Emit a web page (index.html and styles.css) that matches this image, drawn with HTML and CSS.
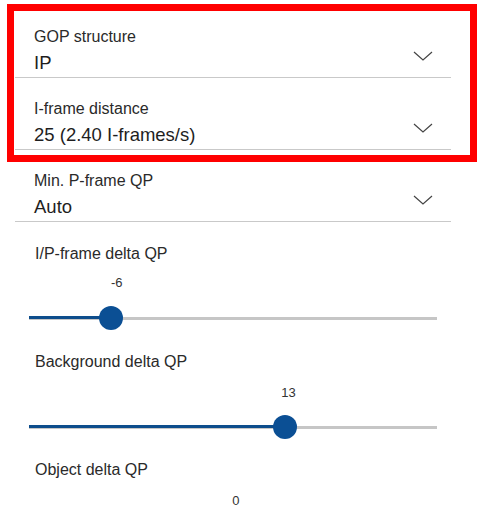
FILE: index.html
```html
<!DOCTYPE html>
<html lang="en">
<head>
  <meta charset="UTF-8" />
  <title>Stream settings</title>
  <link rel="stylesheet" href="styles.css">
</head>
<body>
  <div class="panel">
    <div class="field">
      <div class="field-text">
        <div class="label">GOP structure</div>
        <div class="value">IP</div>
      </div>
      <svg class="chevron" width="20" height="10" viewBox="0 0 20 10"><polyline points="1,1 10,9 19,1" /></svg>
    </div>

    <div class="field">
      <div class="field-text">
        <div class="label">I-frame distance</div>
        <div class="value">25 (2.40 I-frames/s)</div>
      </div>
      <svg class="chevron" width="20" height="10" viewBox="0 0 20 10"><polyline points="1,1 10,9 19,1" /></svg>
    </div>

    <div class="field">
      <div class="field-text">
        <div class="label">Min. P-frame QP</div>
        <div class="value">Auto</div>
      </div>
      <svg class="chevron" width="20" height="10" viewBox="0 0 20 10"><polyline points="1,1 10,9 19,1" /></svg>
    </div>

    <div class="slider">
      <div class="label">I/P-frame delta QP</div>
      <div class="bubble-row"><span class="bubble" style="left: 21.5%">-6</span></div>
      <div class="track">
        <div class="fill" style="width: 20.1%"></div>
        <div class="thumb" style="left: 20.1%"></div>
      </div>
    </div>

    <div class="slider">
      <div class="label">Background delta QP</div>
      <div class="bubble-row"><span class="bubble" style="left: 63.6%">13</span></div>
      <div class="track">
        <div class="fill" style="width: 62.7%"></div>
        <div class="thumb" style="left: 62.7%"></div>
      </div>
    </div>

    <div class="slider">
      <div class="label">Object delta QP</div>
      <div class="bubble-row"><span class="bubble" style="left: 50.7%">0</span></div>
      <div class="track">
        <div class="fill" style="width: 49.8%"></div>
        <div class="thumb" style="left: 49.8%"></div>
      </div>
    </div>

    <div class="highlight"></div>
  </div>
</body>
</html>
```

FILE: styles.css
```css
html {
  overflow: hidden;
}
body {
  margin: 0;
  background: #fff;
  font-family: "Liberation Sans", Arial, sans-serif;
  color: #222;
}
.panel {
  position: relative;
  width: 436px;
  padding: 6px 0 0 15px;
}
.field {
  display: flex;
  justify-content: space-between;
  height: 72px;
  box-sizing: border-box;
  padding: 22px 18px 3px 19px;
  border-bottom: 1px solid #c9c9c9;
}
.label {
  font-size: 16px;
  line-height: 18px;
  color: #2a2a2a;
}
.value {
  margin-top: 6px;
  font-size: 18.5px;
  line-height: 22px;
  color: #1e1e1e;
}
.chevron {
  margin-top: 23px;
  fill: none;
  stroke: #444;
  stroke-width: 1.2;
}
.slider {
  height: 108px;
  padding-top: 23px;
  box-sizing: border-box;
}
.slider .label {
  padding-left: 20px;
}
.bubble-row {
  position: relative;
  height: 15px;
  margin: 12px 0 0 14px;
  width: 408px;
}
.bubble {
  position: absolute;
  top: 0;
  transform: translateX(-50%);
  font-size: 13px;
  line-height: 15px;
  color: #333;
}
.slider + .slider .bubble-row {
  margin-top: 14px;
}
.track {
  position: relative;
  margin: 16px 0 0 14px;
  width: 408px;
  height: 24px;
  background: linear-gradient(#c6c6c6, #c6c6c6) 0 50% / 100% 3px no-repeat;
}
.slider + .slider .track {
  margin-top: 15px;
}
.fill {
  position: absolute;
  left: 0;
  top: 10px;
  height: 3px;
  background: #0d4d8c;
}
.thumb {
  position: absolute;
  top: 0;
  width: 24px;
  height: 24px;
  margin-left: -12px;
  border-radius: 50%;
  background: #0b4f94;
}
.highlight {
  position: absolute;
  left: 7px;
  top: 4px;
  width: 470px;
  height: 158px;
  box-sizing: border-box;
  border: 7px solid #ff0000;
}
```
